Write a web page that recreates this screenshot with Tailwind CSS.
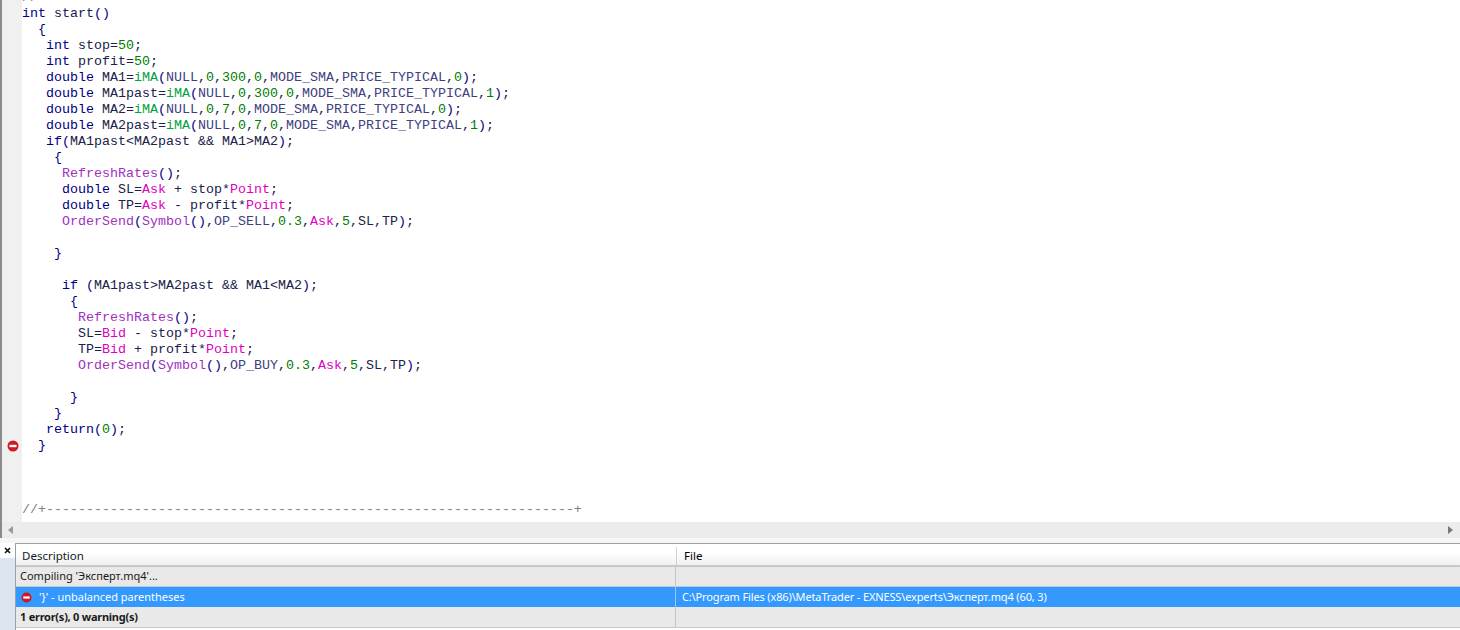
<!DOCTYPE html>
<html lang="ru">
<head>
    <meta charset="UTF-8">
    <title>MetaEditor</title>
    <script src="https://cdn.jsdelivr.net/npm/@tailwindcss/browser@4"></script>
</head>
<body class="w-[1460px] h-[630px] overflow-hidden bg-white flex flex-col font-['Noto_Sans',sans-serif]">
    <!-- editor -->
    <div class="h-[522px] flex overflow-hidden">
        <div class="w-[22px] shrink-0 bg-[#f0f0f0] border-l-2 border-[#8a8a8a] relative">
            <svg class="absolute left-[5px] top-[440px]" width="12" height="12" viewBox="0 0 12 12">
                <circle cx="6" cy="6" r="5.5" fill="#d01820"/>
                <rect x="2.5" y="4.8" width="7" height="2.4" fill="#fff"/>
            </svg>
        </div>
        <pre class="flex-1 mt-[-10px] font-['Liberation_Mono',monospace] text-[13.33px] leading-[16px] text-[#20204a]"><span class="text-[#808080]">//+------------------------------------------------------------------+</span>
<span class="text-[#00007f]">int</span> start<span class="text-[#00007f]">()</span>
  <span class="text-[#00007f]">{</span>
   <span class="text-[#00007f]">int</span> stop=<span class="text-[#008000]">50</span>;
   <span class="text-[#00007f]">int</span> profit=<span class="text-[#008000]">50</span>;
   <span class="text-[#00007f]">double</span> MA1=<span class="text-[#00a040]">iMA</span><span class="text-[#00007f]">(</span><span class="text-[#404080]">NULL</span>,<span class="text-[#008000]">0</span>,<span class="text-[#008000]">300</span>,<span class="text-[#008000]">0</span>,<span class="text-[#404080]">MODE_SMA</span>,<span class="text-[#404080]">PRICE_TYPICAL</span>,<span class="text-[#008000]">0</span><span class="text-[#00007f]">)</span>;
   <span class="text-[#00007f]">double</span> MA1past=<span class="text-[#00a040]">iMA</span><span class="text-[#00007f]">(</span><span class="text-[#404080]">NULL</span>,<span class="text-[#008000]">0</span>,<span class="text-[#008000]">300</span>,<span class="text-[#008000]">0</span>,<span class="text-[#404080]">MODE_SMA</span>,<span class="text-[#404080]">PRICE_TYPICAL</span>,<span class="text-[#008000]">1</span><span class="text-[#00007f]">)</span>;
   <span class="text-[#00007f]">double</span> MA2=<span class="text-[#00a040]">iMA</span><span class="text-[#00007f]">(</span><span class="text-[#404080]">NULL</span>,<span class="text-[#008000]">0</span>,<span class="text-[#008000]">7</span>,<span class="text-[#008000]">0</span>,<span class="text-[#404080]">MODE_SMA</span>,<span class="text-[#404080]">PRICE_TYPICAL</span>,<span class="text-[#008000]">0</span><span class="text-[#00007f]">)</span>;
   <span class="text-[#00007f]">double</span> MA2past=<span class="text-[#00a040]">iMA</span><span class="text-[#00007f]">(</span><span class="text-[#404080]">NULL</span>,<span class="text-[#008000]">0</span>,<span class="text-[#008000]">7</span>,<span class="text-[#008000]">0</span>,<span class="text-[#404080]">MODE_SMA</span>,<span class="text-[#404080]">PRICE_TYPICAL</span>,<span class="text-[#008000]">1</span><span class="text-[#00007f]">)</span>;
   <span class="text-[#00007f]">if(</span>MA1past&lt;MA2past &amp;&amp; MA1&gt;MA2<span class="text-[#00007f]">)</span>;
    <span class="text-[#00007f]">{</span>
     <span class="text-[#a030c0]">RefreshRates</span><span class="text-[#00007f]">()</span>;
     <span class="text-[#00007f]">double</span> SL=<span class="text-[#e000c0]">Ask</span> + stop*<span class="text-[#e000c0]">Point</span>;
     <span class="text-[#00007f]">double</span> TP=<span class="text-[#e000c0]">Ask</span> - profit*<span class="text-[#e000c0]">Point</span>;
     <span class="text-[#a030c0]">OrderSend</span><span class="text-[#00007f]">(</span><span class="text-[#a030c0]">Symbol</span><span class="text-[#00007f]">()</span>,<span class="text-[#404080]">OP_SELL</span>,<span class="text-[#008000]">0.3</span>,<span class="text-[#e000c0]">Ask</span>,<span class="text-[#008000]">5</span>,SL,TP<span class="text-[#00007f]">)</span>;

    <span class="text-[#00007f]">}</span>

     <span class="text-[#00007f]">if</span> <span class="text-[#00007f]">(</span>MA1past&gt;MA2past &amp;&amp; MA1&lt;MA2<span class="text-[#00007f]">)</span>;
      <span class="text-[#00007f]">{</span>
       <span class="text-[#a030c0]">RefreshRates</span><span class="text-[#00007f]">()</span>;
       SL=<span class="text-[#e000c0]">Bid</span> - stop*<span class="text-[#e000c0]">Point</span>;
       TP=<span class="text-[#e000c0]">Bid</span> + profit*<span class="text-[#e000c0]">Point</span>;
       <span class="text-[#a030c0]">OrderSend</span><span class="text-[#00007f]">(</span><span class="text-[#a030c0]">Symbol</span><span class="text-[#00007f]">()</span>,<span class="text-[#404080]">OP_BUY</span>,<span class="text-[#008000]">0.3</span>,<span class="text-[#e000c0]">Ask</span>,<span class="text-[#008000]">5</span>,SL,TP<span class="text-[#00007f]">)</span>;

      <span class="text-[#00007f]">}</span>
    <span class="text-[#00007f]">}</span>
   <span class="text-[#00007f]">return(</span><span class="text-[#008000]">0</span><span class="text-[#00007f]">)</span>;
  <span class="text-[#00007f]">}</span>



<span class="text-[#808080]">//+------------------------------------------------------------------+</span></pre>
    </div>
    <!-- horizontal scrollbar -->
    <div class="h-[16px] bg-[#ececec] border-l-2 border-[#8a8a8a] flex items-center justify-between pl-[6px] pr-[6px]">
        <svg width="6" height="8" viewBox="0 0 6 8"><path d="M5 0V8L0 4Z" fill="#9a9a9a"/></svg>
        <svg width="6" height="8" viewBox="0 0 6 8"><path d="M0 0V8L5 4Z" fill="#6f7a80"/></svg>
    </div>
    <div class="h-[5px] bg-[#f6f6f6]"></div>
    <!-- toolbox panel -->
    <div class="flex-1 flex min-h-0">
        <div class="w-[15px] shrink-0 flex flex-col">
            <div class="h-[15px] bg-white flex items-center justify-center">
                <svg width="7" height="7" viewBox="0 0 7 7"><path d="M1 1L6 6M6 1L1 6" stroke="#111" stroke-width="1.6"/></svg>
            </div>
            <div class="flex-1 bg-[#dce6f0]"></div>
        </div>
        <div class="flex-1 border-l border-t border-[#a0a0a0] text-[11px] text-[#1a1a1a] flex flex-col">
            <div class="h-[23px] pt-[3px] flex bg-gradient-to-b from-white from-40% to-[#eef0f2] border-b-2 border-[#c8c8c8] text-[11.5px]">
                <div class="w-[661px] pl-[6px] border-r border-[#d0d0d0] flex items-center">Description</div>
                <div class="flex-1 pl-[7px] flex items-center text-black">File</div>
            </div>
            <div class="h-[20px] flex bg-[#e9e9e9] border-b border-[#c8c8c8]">
                <div class="w-[660px] pl-[4px] border-r border-[#c4c4c4] flex items-center">Compiling 'Эксперт.mq4'...</div>
                <div class="flex-1"></div>
            </div>
            <div class="h-[20px] flex bg-[#3399ff] text-white">
                <div class="w-[660px] pl-[5px] border-r border-[#9cc8f0] flex items-center gap-[7px]">
                    <svg width="11" height="11" viewBox="0 0 12 12"><circle cx="6" cy="6" r="5.5" fill="#d01820"/><rect x="2.5" y="4.8" width="7" height="2.4" fill="#fff"/></svg>
                    <span>'}' - unbalanced parentheses</span>
                </div>
                <div class="flex-1 pl-[6px] flex items-center tracking-[-0.14px]">C:\Program Files (x86)\MetaTrader - EXNESS\experts\Эксперт.mq4 (60, 3)</div>
            </div>
            <div class="h-[21px] flex bg-[#e9e9e9] border-b border-[#c8c8c8]">
                <div class="w-[660px] pl-[4px] border-r border-[#c4c4c4] flex items-center font-bold tracking-[-0.25px]">1 error(s), 0 warning(s)</div>
                <div class="flex-1"></div>
            </div>
        </div>
    </div>
</body>
</html>
